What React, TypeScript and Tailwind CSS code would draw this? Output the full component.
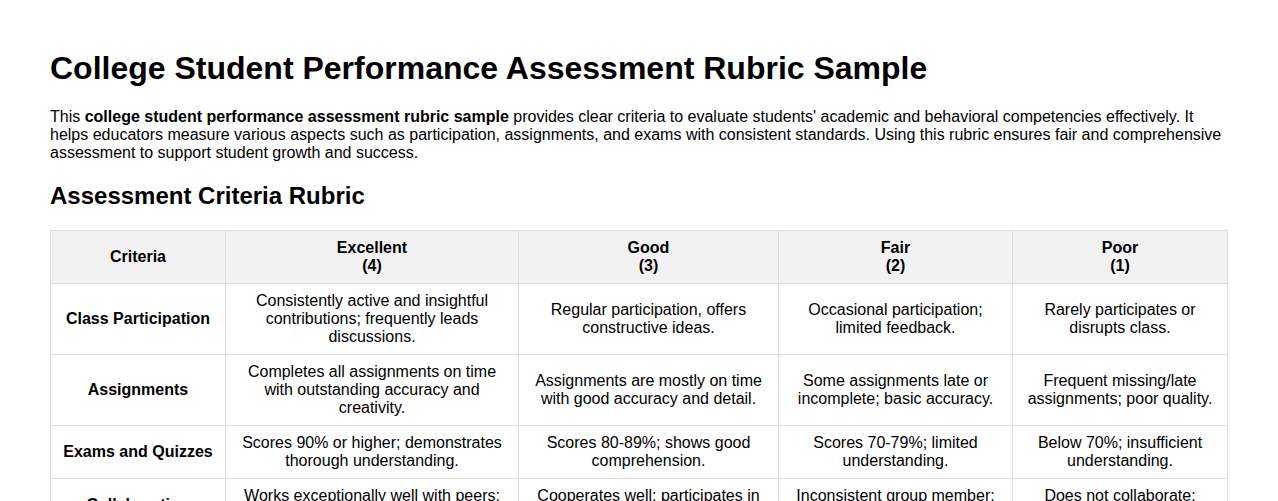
import React from 'react';

const rows = [
  {
    criteria: 'Class Participation',
    cells: [
      'Consistently active and insightful contributions; frequently leads discussions.',
      'Regular participation, offers constructive ideas.',
      'Occasional participation; limited feedback.',
      'Rarely participates or disrupts class.',
    ],
  },
  {
    criteria: 'Assignments',
    cells: [
      'Completes all assignments on time with outstanding accuracy and creativity.',
      'Assignments are mostly on time with good accuracy and detail.',
      'Some assignments late or incomplete; basic accuracy.',
      'Frequent missing/late assignments; poor quality.',
    ],
  },
  {
    criteria: 'Exams and Quizzes',
    cells: [
      'Scores 90% or higher; demonstrates thorough understanding.',
      'Scores 80-89%; shows good comprehension.',
      'Scores 70-79%; limited understanding.',
      'Below 70%; insufficient understanding.',
    ],
  },
  {
    criteria: 'Collaboration',
    cells: [
      'Works exceptionally well with peers; fosters teamwork.',
      'Cooperates well; participates in group tasks.',
      'Inconsistent group member; limited contribution.',
      'Does not collaborate; disrupts team efforts.',
    ],
  },
];

const levels = [
  { name: 'Excellent', score: 4 },
  { name: 'Good', score: 3 },
  { name: 'Fair', score: 2 },
  { name: 'Poor', score: 1 },
];

const App: React.FC = () => {
  return (
    <div className="min-h-screen bg-white px-[50px] pt-[29px] text-black font-['Liberation_Sans',Arial,sans-serif]">
      <h1 className="text-[32px] font-bold leading-[37px] mt-[21px]">
        College Student Performance Assessment Rubric Sample
      </h1>

      <p className="mt-[21px] text-base leading-[18px]">
        This <strong>college student performance assessment rubric sample</strong> provides clear criteria to evaluate
        students' academic and behavioral competencies effectively. It helps educators measure various aspects such as
        participation, assignments, and exams with consistent standards. Using this rubric ensures fair and
        comprehensive assessment to support student growth and success.
      </p>

      <h2 className="mt-[20px] text-2xl font-bold leading-[28px]">Assessment Criteria Rubric</h2>

      <table className="mt-[20px] w-[1177px] table-fixed border-collapse text-base leading-[18px]">
        <colgroup>
          <col className="w-[175px]" />
          <col className="w-[293px]" />
          <col className="w-[260px]" />
          <col className="w-[234px]" />
          <col className="w-[215px]" />
        </colgroup>
        <thead>
          <tr className="bg-[#f2f2f2]">
            <th className="border border-[#dddddd] px-2 py-[8px] font-bold align-middle">Criteria</th>
            {levels.map((l) => (
              <th key={l.name} className="border border-[#dddddd] px-2 py-[8px] font-bold align-middle">
                {l.name}
                <br />({l.score})
              </th>
            ))}
          </tr>
        </thead>
        <tbody>
          {rows.map((r) => (
            <tr key={r.criteria}>
              <th className="border border-[#dddddd] px-2 py-[8px] font-bold align-middle">{r.criteria}</th>
              {r.cells.map((c, i) => (
                <td key={i} className="border border-[#dddddd] px-2 py-[8px] text-center align-middle">
                  {c}
                </td>
              ))}
            </tr>
          ))}
        </tbody>
      </table>
    </div>
  );
};

export default App;
